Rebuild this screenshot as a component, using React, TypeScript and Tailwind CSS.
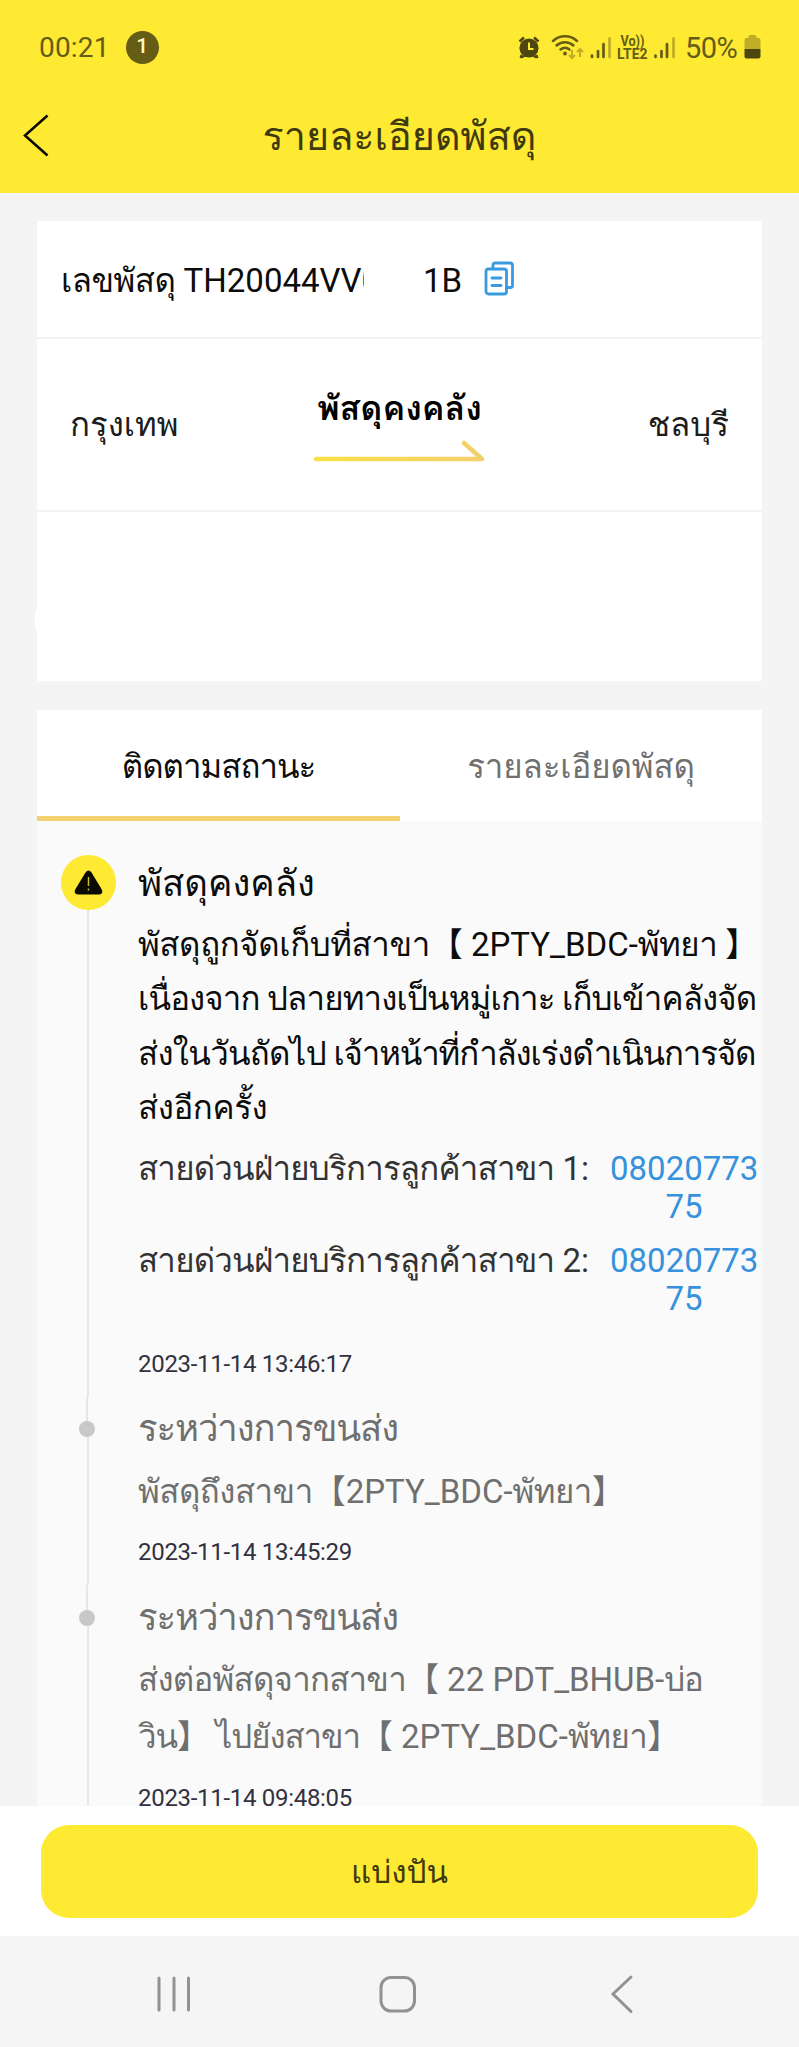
import type { ReactNode } from 'react';

const StatusBar = () => (
  <div className="flex h-[94px] items-center justify-between pl-[39px] pr-[38px] text-[28px] text-[#655c16]">
    <div className="flex items-center gap-[16px]">
      <span className="pt-[2px] tracking-[0.2px]">00:21</span>
      <span className="flex size-[33px] items-center justify-center rounded-full bg-[#655c16] text-[21px] font-medium text-[#fff7c0]">1</span>
    </div>
    <div className="flex items-center">
      <svg width="162" height="28" viewBox="518 32 162 28" fill="none">
        {/* alarm */}
        <g fill="#4d460f">
          <circle cx="529" cy="47" r="9.6" />
          <path d="M520.5 53.5l-1 3.5 3 .3 3-2zM537.5 53.5l1 3.5-3 .3-3-2z" />
        </g>
        <path d="M519.5 40.5l4.5-4M538.5 40.5l-4.5-4" stroke="#4d460f" strokeWidth="2.6" />
        <path d="M529 41.5v6.5h4.5" stroke="#fee933" strokeWidth="2" />
        {/* wifi */}
        <g stroke="#655c16" strokeWidth="2.5" strokeLinecap="round">
          <path d="M553 40a17.5 17.5 0 0 1 24 0" />
          <path d="M556.5 44.5a12.5 12.5 0 0 1 17 0" />
          <path d="M560.5 48.5a7 7 0 0 1 9 0" />
        </g>
        <circle cx="565" cy="52.5" r="1.9" fill="#655c16" />
        <path d="M572 49v7.5m-3-2.5l3 3 3-3M580 56v-7.5m-3 2.5l3-3 3 3" stroke="#bfae25" strokeWidth="2" />
        {/* first signal */}
        <g strokeWidth="2.7" strokeLinecap="round" stroke="#655c16">
          <path d="M592 54.5v1.5M598 50v6M603.5 43v13" />
          <path d="M609.5 37.5V56" stroke="#bfae25" />
        </g>
        {/* second signal */}
        <g strokeWidth="2.7" strokeLinecap="round" stroke="#655c16">
          <path d="M655.5 54.5v1.5M661.5 50v6M667 43v13" />
          <path d="M673.5 37.5V56" stroke="#bfae25" />
        </g>
        <text x="620.5" y="45" fontSize="14" fontWeight="700" textLength="24" lengthAdjust="spacingAndGlyphs" fill="#655c16">Vo))</text>
        <text x="617" y="58" fontSize="14" fontWeight="700" textLength="30.5" lengthAdjust="spacingAndGlyphs" fill="#655c16">LTE2</text>
      </svg>
      <span className="ml-[5px] w-[55px] pt-[3px] text-[29px] tracking-[-0.6px]">50%</span>
      <svg className="ml-[4px]" width="17" height="26" viewBox="0 0 17 26">
        <path d="M4.5 2.5q0-1.5 1.5-1.5h5q1.5 0 1.5 1.5V4h2q2 0 2 2v9H.5V6q0-2 2-2h2z" fill="#bfae25" />
        <path d="M.5 15h16v7.5q0 2-2 2h-12q-2 0-2-2z" fill="#4d460f" />
      </svg>
    </div>
  </div>
);

const Header = () => (
  <header className="h-[193px] bg-[#fee933]">
    <StatusBar />
    <div className="flex h-[83px] items-center pl-[22px] pr-[50px]">
      <svg width="28" height="44" viewBox="0 0 28 44" fill="none" stroke="#0c0b02" strokeWidth="2.6">
        <path d="M25.5 1.5L3 21.5l22.5 20" />
      </svg>
      <h1 className="flex-1 pt-[2px] text-center text-[39.5px] leading-[60px] text-[#3f390f]">รายละเอียดพัสดุ</h1>
    </div>
  </header>
);

const Summary = () => (
  <section className="mx-[37px] mt-[28px] h-[460px]">
    <div className="flex h-[116px] items-center bg-white pl-[24px] pt-[3px] text-[33px] text-[#0c0c0c]">
      <div className="w-[303px] overflow-hidden whitespace-nowrap leading-[60px]">
        <span className="tracking-[-0.5px]">เลขพัสดุ</span> TH20044VV0
      </div>
      <span className="ml-[59px] w-[40px] whitespace-nowrap">1B</span>
      <svg className="mb-[3px] ml-[21px]" width="32" height="36" viewBox="0 0 32 36" fill="none" stroke="#3a9ae0" strokeWidth="2.8" strokeLinejoin="round" strokeLinecap="round">
        <path d="M9 7V4q0-2 2-2h15q2.5 0 2.5 2.5v20q0 2-2 2h-4" />
        <rect x="2" y="8" width="20.5" height="25" rx="2.5" />
        <path d="M8 17h9M8 24.5h9" />
      </svg>
    </div>
    <div className="mt-[2px] grid h-[171px] grid-cols-3 items-center bg-white pl-[33px] pr-[33px] text-[33px] text-[#1c1c1c]">
      <span className="leading-[60px]">กรุงเทพ</span>
      <div className="flex flex-col items-center pb-[3px]">
        <strong className="whitespace-nowrap text-[34px] font-bold leading-[48px] text-black">พัสดุคงคลัง</strong>
        <svg className="mt-[7px]" width="172" height="24" viewBox="0 0 172 24" fill="none" strokeWidth="4.5" strokeLinecap="round" strokeLinejoin="round">
          <defs>
            <linearGradient id="arrow" gradientUnits="userSpaceOnUse" x1="0" y1="0" x2="172" y2="0">
              <stop stopColor="#f8e146" />
              <stop offset="1" stopColor="#f3cf6c" />
            </linearGradient>
          </defs>
          <path d="M3 20h166L151 4" stroke="url(#arrow)" />
        </svg>
      </div>
      <span className="text-right leading-[60px]">ชลบุรี</span>
    </div>
    <div className="relative mt-[2px] h-[169px] bg-white">
      <div className="absolute -left-[2px] top-[97px] h-[22px] w-[4px] rounded-l-full bg-white"></div>
    </div>
  </section>
);

const Tabs = () => (
  <div className="flex h-[111px] bg-white text-center text-[33px] leading-[114px]">
    <div className="w-[363px] border-b-[5px] border-[#f1d26e] tracking-[-1px] text-[#0c0c0c]">ติดตามสถานะ</div>
    <div className="flex-1 tracking-[-0.1px] text-[#707070]">รายละเอียดพัสดุ</div>
  </div>
);

const Dot = () => (
  <>
    <span className="mr-[2px] h-[25px] w-[2px] bg-[#e6e6e6]"></span>
    <span className="mr-[2px] size-[16px] shrink-0 rounded-full bg-[#c8c8c8]"></span>
  </>
);

type EventProps = {
  marker: ReactNode;
  title: ReactNode;
  time: string;
  className: string;
  children: ReactNode;
};

const Event = ({ marker, title, time, className, children }: EventProps) => (
  <div className={`flex ${className}`}>
    <div className="flex w-[102px] shrink-0 flex-col items-center">
      {marker}
      <span className="w-[2px] flex-1 bg-[#e6e6e6]"></span>
    </div>
    <div className="-ml-px flex flex-1 flex-col whitespace-nowrap">
      <h2 className="h-[66px] text-[36.5px] leading-[65px]">{title}</h2>
      {children}
      <time className="mt-[15px] text-[24px] leading-[30px] tracking-[-0.3px] text-[#33313f]">{time}</time>
    </div>
  </div>
);

const InTransit = () => <span className="tracking-[-1.1px]">ระหว่างการขนส่ง</span>;

const Hotline = ({ no }: { no: number }) => (
  <div className="flex h-[92px] text-[33px] leading-[38px]">
    <span className="w-[472px] text-[#333333]">
      <span className="tracking-[-0.77px]">สายด่วนฝ่ายบริการลูกค้าสาขา</span> {no}:
    </span>
    <span className="w-[148px] text-center text-[#3692dc]">
      08020773
      <br />
      75
    </span>
  </div>
);

const App = () => {
  return (
    <div className="flex h-[2047px] w-[799px] flex-col overflow-hidden bg-[#f4f4f4] font-[Roboto,Loma,'Noto_Sans_CJK_SC',sans-serif]">
      <Header />
      <Summary />
      <section className="mx-[37px] mt-[29px] h-[1096px] overflow-hidden bg-[#fafafa]">
        <Tabs />
        <Event
          className="h-[575px] pt-[30px] text-[#0c0c0c]"
          title="พัสดุคงคลัง"
          time="2023-11-14 13:46:17"
          marker={
            <span className="mt-[4px] flex size-[55px] shrink-0 items-center justify-center rounded-full bg-[#fee933]">
              <svg width="29" height="26" viewBox="0 0 29 26">
                <path d="M11.5 2.5q3-4 6 0l10 16.5q2.5 5-2.5 5.5H4q-5-.5-2.5-5.5z" fill="#0b0a02" />
                <path d="M14.5 7v9M14.5 18.5v2" stroke="#c9b92c" strokeWidth="1.5" />
              </svg>
            </span>
          }
        >
          <p className="mb-[15px] h-[218px] pt-[1px] text-[33px] leading-[54.3px]">
            <span className="tracking-[-0.4px]">พัสดุถูกจัดเก็บที่สาขา</span>【 2PTY_BDC-<span className="tracking-[-0.5px]">พัทยา</span> 】
            <br />
            <span className="tracking-[-0.85px]">เนื่องจาก ปลายทางเป็นหมู่เกาะ เก็บเข้าคลังจัด</span>
            <br />
            <span className="tracking-[-0.7px]">ส่งในวันถัดไป </span>
            <span className="tracking-[-1.15px]">เจ้าหน้าที่กำลังเร่งดำเนินการจัด</span>
            <br />
            <span className="tracking-[-0.4px]">ส่งอีกครั้ง</span>
          </p>
          <Hotline no={1} />
          <Hotline no={2} />
        </Event>
        <Event className="h-[189px] text-[#6f6f6f]" title={<InTransit />} time="2023-11-14 13:45:29" marker={<Dot />}>
          <p className="h-[60px] text-[33px] leading-[60px]">
            <span className="tracking-[-0.5px]">พัสดุถึงสาขา</span>【2PTY_BDC-<span className="tracking-[-0.5px]">พัทยา</span>】
          </p>
        </Event>
        <Event className="h-[246px] text-[#6f6f6f]" title={<InTransit />} time="2023-11-14 09:48:05" marker={<Dot />}>
          <p className="h-[117px] text-[33px] leading-[57px]">
            <span className="tracking-[-0.75px]">ส่งต่อพัสดุจากสาขา</span>【 22 PDT_BHUB-<span className="tracking-[-1.2px]">บ่อ</span>
            <br />
            <span className="tracking-[-1.1px]">วิน】 ไปยังสาขา</span>【 2PTY_BDC-<span className="tracking-[-0.5px]">พัทยา</span>】
          </p>
        </Event>
      </section>
      <div className="flex h-[130px] items-center justify-center bg-white px-[41px]">
        <button className="h-[93px] w-full rounded-[28px] bg-[#fee933] pt-[3px] text-[31.5px] text-[#3f390f]">แบ่งปัน</button>
      </div>
      <nav className="h-[111px] bg-[#f5f5f5]">
        <svg width="799" height="111" viewBox="0 0 799 111" fill="none" stroke="#929292" strokeWidth="3" strokeLinecap="round">
          <path d="M159 42v32M174 42v32M188.5 42v32" />
          <rect x="381" y="41.5" width="33.5" height="33.5" rx="10" />
          <path d="M631 41l-18 17 18 17.5" />
        </svg>
      </nav>
    </div>
  );
};

export default App;
